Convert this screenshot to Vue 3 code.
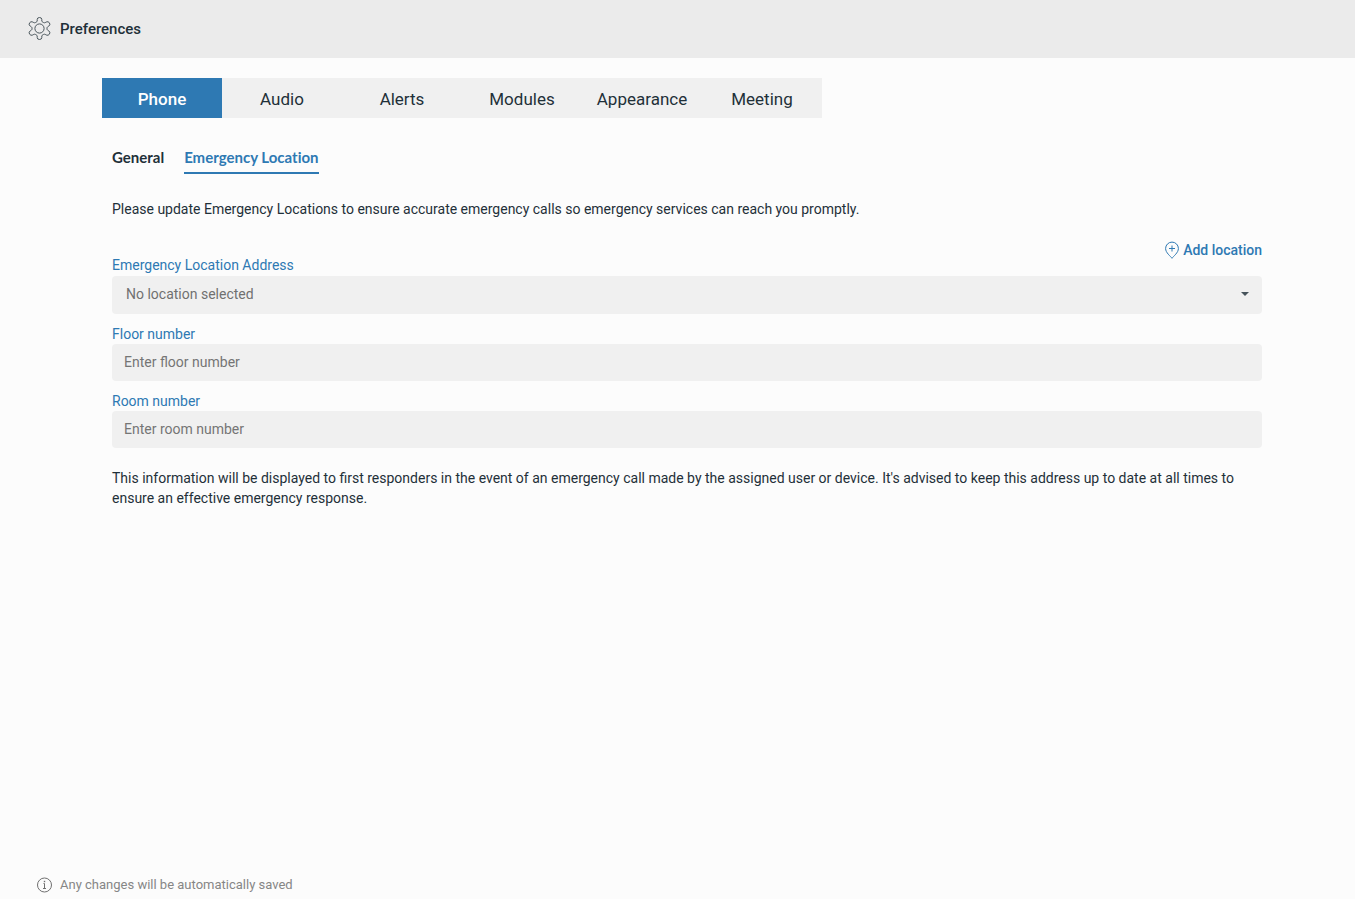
<script setup>
import { ref } from 'vue'

const tabs = ['Phone', 'Audio', 'Alerts', 'Modules', 'Appearance', 'Meeting']
const activeTab = ref('Phone')

const sections = ['General', 'Emergency Location']
const activeSection = ref('Emergency Location')

const address = ref('')
const floor = ref('')
const room = ref('')
</script>

<template>
  <div class="page">
    <header class="header">
      <svg class="gear" viewBox="0 0 24 26" aria-hidden="true">
        <path d="M9.2 3.5 Q9.2 1.5 11.5 1.5 Q13.8 1.5 13.8 3.5 V5 Q14 5.8 14.8 6.2 L15.6 6.6 Q16.5 7 17.2 6.6 L18.2 6 Q20.2 5 21.5 6.9 Q22.6 9 20.7 10.2 L19.7 10.8 Q19 11.3 19 12.1 V12.9 Q19 13.7 19.7 14.2 L20.7 14.8 Q22.6 16 21.5 18.1 Q20.2 20 18.2 19 L17.2 18.4 Q16.5 18 15.6 18.4 L14.8 18.8 Q14 19.2 13.8 20 V21.5 Q13.8 23.5 11.5 23.5 Q9.2 23.5 9.2 21.5 V20 Q9 19.2 8.2 18.8 L7.4 18.4 Q6.5 18 5.8 18.4 L4.8 19 Q2.8 20 1.5 18.1 Q.4 16 2.3 14.8 L3.3 14.2 Q4 13.7 4 12.9 V12.1 Q4 11.3 3.3 10.8 L2.3 10.2 Q.4 9 1.5 6.9 Q2.8 5 4.8 6 L5.8 6.6 Q6.5 7 7.4 6.6 L8.2 6.2 Q9 5.8 9.2 5 Z" />
        <circle cx="11.5" cy="12.5" r="4.6" />
      </svg>
      <h1 class="title">Preferences</h1>
    </header>

    <main class="content">
      <nav class="tabs" aria-label="Preference categories">
        <button
          v-for="tab in tabs"
          :key="tab"
          type="button"
          class="tab"
          :class="{ active: tab === activeTab }"
          @click="activeTab = tab"
        >{{ tab }}</button>
      </nav>

      <section class="panel">
        <nav class="sections" aria-label="Phone sections">
          <button
            v-for="section in sections"
            :key="section"
            type="button"
            class="section"
            :class="{ active: section === activeSection }"
            @click="activeSection = section"
          >{{ section }}</button>
        </nav>

        <p class="text">Please update Emergency Locations to ensure accurate emergency calls so emergency services can reach you promptly.</p>

        <form class="form" @submit.prevent>
          <div class="actions">
            <button type="button" class="add">
              <svg class="pin" viewBox="0 0 14 18" aria-hidden="true">
                <path d="M7 17.3 C5.6 15.2 .6 11.8 .6 7.5 A6.4 6.4 0 0 1 13.4 7.5 C13.4 11.8 8.4 15.2 7 17.3 Z" />
                <path d="M7 4.5 V10.5 M4 7.5 H10" />
              </svg>
              Add location
            </button>
          </div>
          <div class="field">
            <label class="label" for="address">Emergency Location Address</label>
            <div class="select-box">
              <select id="address" v-model="address" class="control select">
                <option value="">No location selected</option>
              </select>
              <svg class="caret" viewBox="0 0 8 4" aria-hidden="true"><path d="M0 0 H8 L4 4 Z" /></svg>
            </div>
          </div>
          <div class="field">
            <label class="label" for="floor">Floor number</label>
            <input id="floor" v-model="floor" class="control" type="text" placeholder="Enter floor number">
          </div>
          <div class="field">
            <label class="label" for="room">Room number</label>
            <input id="room" v-model="room" class="control" type="text" placeholder="Enter room number">
          </div>
        </form>

        <p class="text">This information will be displayed to first responders in the event of an emergency call made by the assigned user or device. It's advised to keep this address up to date at all times to ensure an effective emergency response.</p>
      </section>
    </main>

    <footer class="footer">
      <svg class="info" viewBox="0 0 17 17" aria-hidden="true">
        <circle cx="8.5" cy="8" r="7" />
        <path d="M7.5 6.5 H8.5 V11.5 M7 11.5 H10" />
        <path class="dot" d="M7.8 3.8 H9.2 V5.2 H7.8 Z" />
      </svg>
      Any changes will be automatically saved
    </footer>
  </div>
</template>

<style>
body {
  background: #fcfcfc;
}
</style>

<style scoped>
.page {
  display: flex;
  flex-direction: column;
  box-sizing: border-box;
  min-height: 100vh;
  color: #1f3039;
  font-family: Roboto, "Liberation Sans", sans-serif;
  font-size: 14px;
  line-height: 20px;
}

button,
input,
select {
  margin: 0;
  border: 0;
  padding: 0;
  background: none;
  color: inherit;
  font: inherit;
}

button {
  cursor: pointer;
}

.header {
  display: flex;
  align-items: center;
  gap: 8px;
  height: 58px;
  padding: 0 28px;
  box-sizing: border-box;
  background: #ebebeb;
}

.gear {
  width: 24px;
  height: 26px;
  fill: none;
  stroke: #4a565c;
  stroke-width: 1;
}

.title {
  margin: 0;
  font-size: 15px;
  font-weight: 500;
}

.content {
  flex: 1;
  padding: 20px 93px 20px 102px;
}

.tabs {
  display: grid;
  grid-template-columns: repeat(6, 1fr);
  max-width: 720px;
  background: #f0f0f0;
}

.tab {
  height: 40px;
  padding-top: 2px;
  font-size: 17px;
}

.tab.active {
  background: #2e79b3;
  color: #fff;
  font-weight: 500;
}

.panel {
  padding: 28px 0 0 10px;
}

.sections {
  display: flex;
  gap: 20px;
  margin-bottom: 25px;
}

.section {
  padding: 1px 0 5px;
  border-bottom: 2px solid transparent;
  font-family: Lato, Roboto, sans-serif;
  font-size: 15px;
  font-weight: 700;
  font-variant-ligatures: none;
}

.section.active {
  border-color: #2e79b3;
  color: #2e79b3;
}

.text {
  margin: 0;
}

.form {
  margin: 21px 0 20px;
}

.actions {
  display: flex;
  justify-content: flex-end;
  height: 15px;
}

.add {
  display: flex;
  align-items: center;
  gap: 4px;
  height: 20px;
  color: #2e79b3;
  font-weight: 500;
}

.pin {
  width: 14px;
  height: 18px;
  fill: none;
  stroke: #2e79b3;
}

.field {
  display: flex;
  flex-direction: column;
}

.field + .field {
  margin-top: 10px;
}

.label {
  align-self: flex-start;
  color: #2e79b3;
}

.control {
  display: block;
  width: 100%;
  height: 37px;
  box-sizing: border-box;
  padding: 0 12px 2px;
  border-radius: 4px;
  background: #f0f0f0;
}

.control::placeholder {
  color: #757575;
  opacity: 1;
}

.select-box {
  display: grid;
  align-items: center;
  padding-top: 1px;
}

.select,
.caret {
  grid-area: 1 / 1;
}

.select {
  height: 38px;
  padding: 0 32px 2px 14px;
  appearance: none;
  color: #707070;
}

.caret {
  justify-self: end;
  width: 8px;
  height: 4px;
  margin: 0 13px 2px 0;
  fill: #46535b;
  pointer-events: none;
}

.footer {
  display: flex;
  align-items: center;
  gap: 7px;
  padding: 0 36px 4px;
  color: #868686;
  font-size: 13px;
}

.info {
  width: 17px;
  height: 17px;
  fill: none;
  stroke: #707070;
}

.dot {
  fill: #707070;
  stroke: none;
}
</style>
